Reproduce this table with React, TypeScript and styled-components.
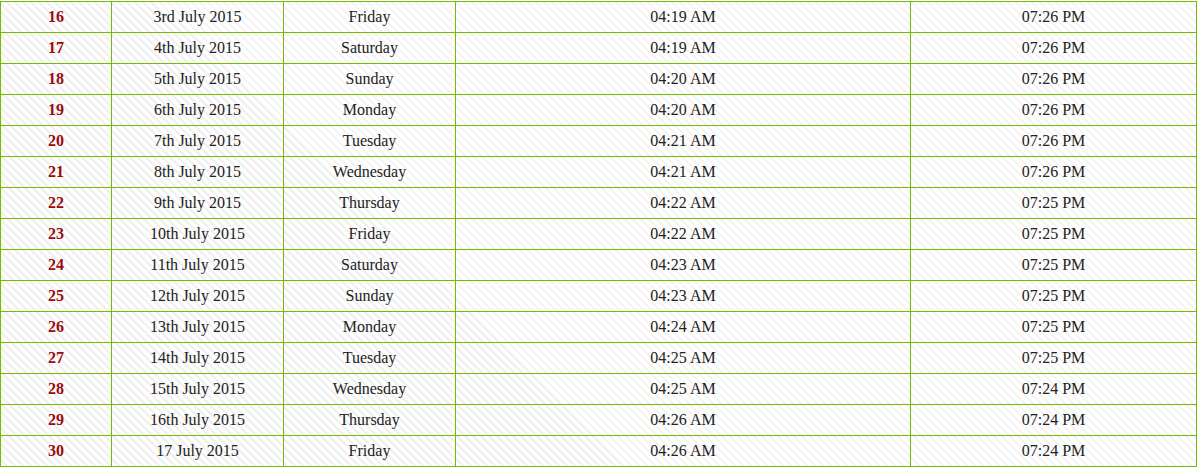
import React from "react";
import styled, { createGlobalStyle } from "styled-components";

const Global = createGlobalStyle`
  html, body { margin: 0; padding: 0; background: #fff; }
  body { padding-top: 1px; }
`;

const Table = styled.table`
  border-collapse: collapse;
  width: 1196px;
  table-layout: fixed;
  font-family: "Liberation Serif", "DejaVu Serif", serif;
  font-size: 16px;
  color: #222;
  background-color: #fff;
  background-image: repeating-linear-gradient(
    45deg,
    #ffffff 0px,
    #ffffff 4px,
    #efefef 4px,
    #efefef 5.66px
  );
`;

const Col = styled.col<{ $w: number }>`
  width: ${(p) => p.$w}px;
`;

const Row = styled.tr`
  height: 31px;
`;

const Cell = styled.td<{ $num?: boolean }>`
  border: 1px solid #76b900;
  text-align: center;
  padding: 0;
  height: 30px;
  line-height: 30px;
  font-weight: ${(p) => (p.$num ? 700 : 400)};
  color: ${(p) => (p.$num ? "#9b0b0b" : "#222")};
`;

const widths = [111, 172, 172, 455, 286];

const rows: [string, string, string, string, string][] = [
  ["16", "3rd July 2015", "Friday", "04:19 AM", "07:26 PM"],
  ["17", "4th July 2015", "Saturday", "04:19 AM", "07:26 PM"],
  ["18", "5th July 2015", "Sunday", "04:20 AM", "07:26 PM"],
  ["19", "6th July 2015", "Monday", "04:20 AM", "07:26 PM"],
  ["20", "7th July 2015", "Tuesday", "04:21 AM", "07:26 PM"],
  ["21", "8th July 2015", "Wednesday", "04:21 AM", "07:26 PM"],
  ["22", "9th July 2015", "Thursday", "04:22 AM", "07:25 PM"],
  ["23", "10th July 2015", "Friday", "04:22 AM", "07:25 PM"],
  ["24", "11th July 2015", "Saturday", "04:23 AM", "07:25 PM"],
  ["25", "12th July 2015", "Sunday", "04:23 AM", "07:25 PM"],
  ["26", "13th July 2015", "Monday", "04:24 AM", "07:25 PM"],
  ["27", "14th July 2015", "Tuesday", "04:25 AM", "07:25 PM"],
  ["28", "15th July 2015", "Wednesday", "04:25 AM", "07:24 PM"],
  ["29", "16th July 2015", "Thursday", "04:26 AM", "07:24 PM"],
  ["30", "17 July 2015", "Friday", "04:26 AM", "07:24 PM"],
];

export default function App() {
  return (
    <>
      <Global />
      <Table>
        <colgroup>
          {widths.map((w, i) => (
            <Col key={i} $w={w} />
          ))}
        </colgroup>
        <tbody>
          {rows.map((r) => (
            <Row key={r[0]}>
              <Cell $num>{r[0]}</Cell>
              <Cell>{r[1]}</Cell>
              <Cell>{r[2]}</Cell>
              <Cell>{r[3]}</Cell>
              <Cell>{r[4]}</Cell>
            </Row>
          ))}
        </tbody>
      </Table>
    </>
  );
}
